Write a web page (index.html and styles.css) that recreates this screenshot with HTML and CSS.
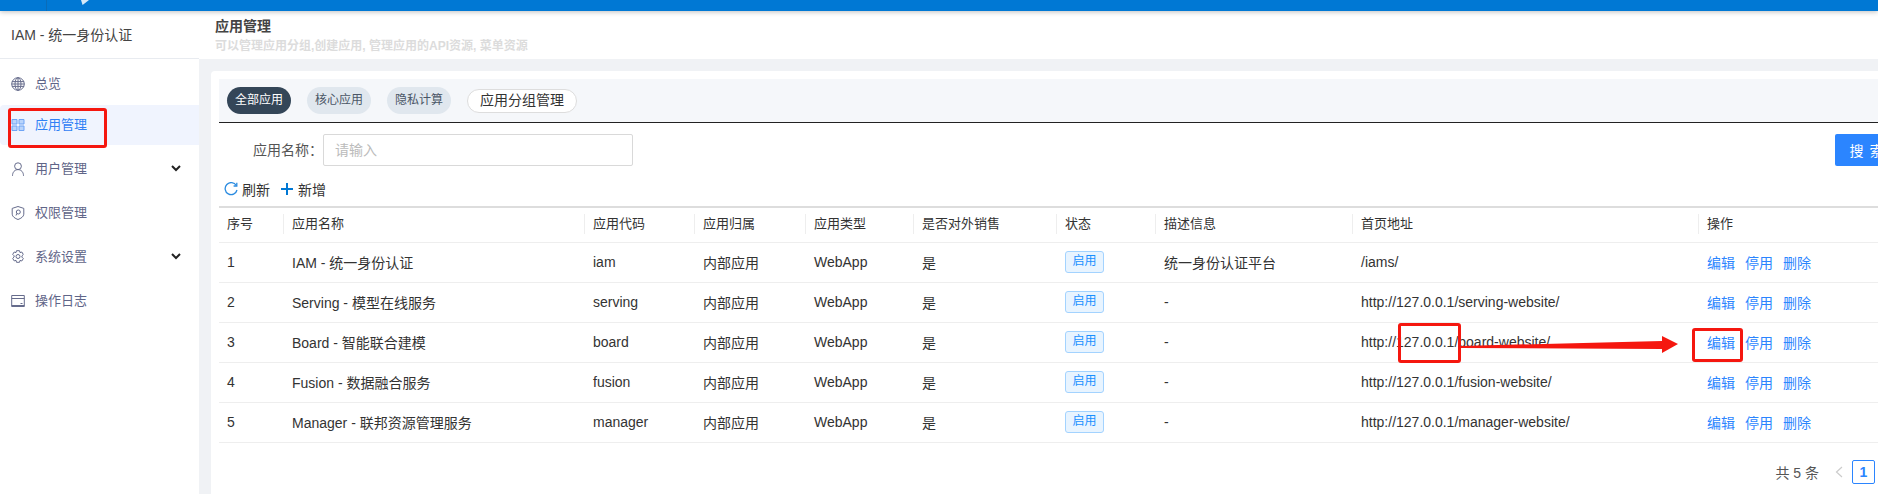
FILE: index.html
```html
<!DOCTYPE html>
<html lang="zh-CN">
<head>
    <meta charset="UTF-8">
    <meta name="viewport" content="width=device-width, initial-scale=1.0">
    <title>应用管理</title>
    <link rel="stylesheet" href="styles.css">
</head>
<body>
    <header class="topbar">
        <span class="topbar-line"></span>
        <span class="topbar-notch"></span>
    </header>

    <div class="layout">
        <aside class="sidebar">
            <div class="brand">IAM - 统一身份认证</div>
            <nav class="menu">
                <a class="menu-item first">
                    <svg class="menu-icon" viewBox="0 0 14 14"><circle cx="7" cy="7" r="6.3"/><ellipse cx="7" cy="7" rx="3" ry="6.3"/><path d="M7 .7v12.6M1 4.600h12M1 9.400h12M.7 7h12.600"/></svg>
                    <span class="menu-text">总览</span>
                </a>
                <a class="menu-item active">
                    <svg class="menu-icon" viewBox="0 0 14 14"><path class="grid-cell" d="M1 1.500h5v4.500H1zM8 1.500h5v4.500H8zM1 8h5v4.500H1zM8 8h5v4.500H8z"/></svg>
                    <span class="menu-text">应用管理</span>
                </a>
                <a class="menu-item">
                    <svg class="menu-icon" viewBox="0 0 14 14"><circle cx="7" cy="4.200" r="3.400"/><path d="M1.500 13.800c0-3.600 2.200-6.200 5.500-6.200s5.500 2.600 5.500 6.200"/></svg>
                    <span class="menu-text">用户管理</span>
                    <svg class="chevron" viewBox="0 0 10 7"><path d="M1 1l4 4 4-4"/></svg>
                </a>
                <a class="menu-item">
                    <svg class="menu-icon" viewBox="0 0 14 14"><path d="M7 .5l5.800 1.900v5.800c0 2.400-2.900 4.300-5.800 5.300-2.900-1-5.800-2.900-5.800-5.300V2.400z"/><circle cx="7.300" cy="6" r="2"/><path d="M5.800 7.500L5 9.500"/></svg>
                    <span class="menu-text">权限管理</span>
                </a>
                <a class="menu-item">
                    <svg class="menu-icon" viewBox="0 0 14 14"><path d="M5.500.7h3l.5 1.900 1.800-.6 1.500 2.500-1.400 1.400v1.200l1.400 1.400-1.500 2.500-1.800-.6-.5 1.900h-3L5 10.300l-1.800.6-1.500-2.500 1.400-1.400V5.800L1.700 4.400 3.200 2l1.800.6z"/><circle cx="7" cy="6.500" r="2"/></svg>
                    <span class="menu-text">系统设置</span>
                    <svg class="chevron" viewBox="0 0 10 7"><path d="M1 1l4 4 4-4"/></svg>
                </a>
                <a class="menu-item">
                    <svg class="menu-icon" viewBox="0 0 14 14"><path d="M.7 1.500h12.600v11H.7zM.7 4.500h12.600"/><path class="card-bar" d="M.7 11h12.600v1.500H.7zM9.500 9h2v1h-2z"/></svg>
                    <span class="menu-text">操作日志</span>
                </a>
            </nav>
        </aside>

        <main class="main">
            <div class="page-head">
                <h1>应用管理</h1>
                <p>可以管理应用分组,创建应用, 管理应用的API资源, 菜单资源</p>
            </div>

            <section class="card">
                <div class="tabs">
                    <span class="pill pill-on">全部应用</span>
                    <span class="pill">核心应用</span>
                    <span class="pill">隐私计算</span>
                    <span class="pill-outline">应用分组管理</span>
                </div>

                <div class="search-row">
                    <label class="search-label" for="appname">应用名称：</label>
                    <input class="search-input" id="appname" type="text" placeholder="请输入">
                    <button class="search-btn">搜 索</button>
                </div>

                <div class="tools">
                    <span class="tool">
                        <svg class="tool-refresh" viewBox="0 0 14 14"><path d="M12.300 3.500A6 6 0 1 0 13 8"/><path d="M12.800 .8v3.200H9.600"/></svg>
                        刷新
                    </span>
                    <span class="tool">
                        <svg class="tool-plus" viewBox="0 0 12 12"><path d="M6 0v12M0 6h12"/></svg>
                        新增
                    </span>
                </div>

                <table class="grid">
                    <colgroup>
                        <col class="c1"><col class="c2"><col class="c3"><col class="c4"><col class="c5">
                        <col class="c6"><col class="c7"><col class="c8"><col class="c9"><col class="c10">
                    </colgroup>
                    <thead>
                        <tr>
                            <th><span class="th-first">序号</span></th>
                            <th><span>应用名称</span></th>
                            <th><span>应用代码</span></th>
                            <th><span>应用归属</span></th>
                            <th><span>应用类型</span></th>
                            <th><span>是否对外销售</span></th>
                            <th><span>状态</span></th>
                            <th><span>描述信息</span></th>
                            <th><span>首页地址</span></th>
                            <th><span>操作</span></th>
                        </tr>
                    </thead>
                    <tbody>
                        <tr>
                            <td class="num">1</td><td>IAM - 统一身份认证</td><td>iam</td><td>内部应用</td><td>WebApp</td><td>是</td>
                            <td><span class="tag">启用</span></td><td>统一身份认证平台</td><td>/iams/</td>
                            <td><a class="act">编辑</a><a class="act">停用</a><a class="act">删除</a></td>
                        </tr>
                        <tr>
                            <td class="num">2</td><td>Serving - 模型在线服务</td><td>serving</td><td>内部应用</td><td>WebApp</td><td>是</td>
                            <td><span class="tag">启用</span></td><td>-</td><td>http://127.0.0.1/serving-website/</td>
                            <td><a class="act">编辑</a><a class="act">停用</a><a class="act">删除</a></td>
                        </tr>
                        <tr>
                            <td class="num">3</td><td>Board - 智能联合建模</td><td>board</td><td>内部应用</td><td>WebApp</td><td>是</td>
                            <td><span class="tag">启用</span></td><td>-</td><td>http://127.0.0.1/board-website/</td>
                            <td><a class="act">编辑</a><a class="act">停用</a><a class="act">删除</a></td>
                        </tr>
                        <tr>
                            <td class="num">4</td><td>Fusion - 数据融合服务</td><td>fusion</td><td>内部应用</td><td>WebApp</td><td>是</td>
                            <td><span class="tag">启用</span></td><td>-</td><td>http://127.0.0.1/fusion-website/</td>
                            <td><a class="act">编辑</a><a class="act">停用</a><a class="act">删除</a></td>
                        </tr>
                        <tr>
                            <td class="num">5</td><td>Manager - 联邦资源管理服务</td><td>manager</td><td>内部应用</td><td>WebApp</td><td>是</td>
                            <td><span class="tag">启用</span></td><td>-</td><td>http://127.0.0.1/manager-website/</td>
                            <td><a class="act">编辑</a><a class="act">停用</a><a class="act">删除</a></td>
                        </tr>
                    </tbody>
                </table>

                <div class="pager">
                    <span class="pager-total">共 5 条</span>
                    <svg class="pager-prev" viewBox="0 0 8 12"><path d="M7 1L1.500 6 7 11"/></svg>
                    <span class="pager-num">1</span>
                </div>
            </section>
        </main>
    </div>

    <!-- marcas vermelhas feitas por cima da captura -->
    <div class="mark mark-menu"></div>
    <div class="mark mark-ip"></div>
    <div class="mark mark-edit"></div>
    <svg class="mark-arrow" viewBox="0 0 220 20"><polygon points="0,10 202,5 202,0 218,8 202,17 202,13 0,12"/></svg>
</body>
</html>
```

FILE: styles.css
```css
* {
    box-sizing: border-box;
}

html, body {
    height: 100%;
}

body {
    margin: 0;
    overflow: hidden;
    background-color: white;
    color: #333;
    font-family: "Liberation Sans", "Noto Sans CJK SC", sans-serif;
    font-size: 14px;
}

/* barra azul */
.topbar {
    display: flex;
    height: 11px;
    background-color: #0078d4;
    box-shadow: 0 1px 5px rgba(0, 0, 0, 0.25);
    position: relative;
    z-index: 2;
}

.topbar-line {
    width: 1px;
    margin-left: 46px;
    background-color: #0a6cb8;
}

.topbar-notch {
    width: 8px;
    height: 5px;
    margin-left: 34px;
    background-color: #d5e9f8;
    clip-path: polygon(0 0, 100% 0, 20% 100%);
}

.layout {
    display: flex;
    height: 483px;
}

/* menu lateral */
.sidebar {
    width: 199px;
    flex-shrink: 0;
    background-color: white;
}

.brand {
    height: 48px;
    padding: 14px 0 0 11px;
    line-height: 20px;
    color: #444;
    border-bottom: 1px solid #e8ebf0;
}

.menu-item {
    display: flex;
    align-items: center;
    height: 40px;
    margin-bottom: 4px;
    padding-left: 11px;
    font-size: 13px;
    color: #5f6588;
}

.menu-text {
    padding-bottom: 3px;
}

.menu-item.first {
    margin-top: 5px;
    margin-bottom: 1px;
}

.menu-item.active {
    color: #2f80f5;
    background-color: #f0f4fe;
    border-radius: 4px 0 0 4px;
}

.menu-icon {
    width: 14px;
    height: 14px;
    margin-right: 10px;
    fill: none;
    stroke: #666c8c;
    stroke-width: 1;
}

.grid-cell {
    fill: #b9d4fb;
    stroke: #6ea4f5;
}

.card-bar {
    fill: #666c8c;
    stroke: none;
}

.chevron {
    width: 10px;
    height: 7px;
    margin-left: auto;
    margin-right: 18px;
    margin-bottom: 2px;
    fill: none;
    stroke: #222;
    stroke-width: 2;
}

/* area principal */
.main {
    flex: 1;
    min-width: 0;
    overflow: hidden;
    background-color: #f0f2f5;
}

.page-head {
    height: 48px;
    padding: 6px 0 0 16px;
    background-color: white;
}

.page-head h1 {
    margin: 0;
    font-size: 14px;
    font-weight: bold;
    line-height: 18px;
    color: #444;
}

.page-head p {
    margin: 2px 0 0;
    font-size: 12px;
    font-weight: bold;
    line-height: 18px;
    color: #dcdcdc;
}

.card {
    height: 423px;
    margin: 12px 0 0 12px;
    padding: 8px 0 0 8px;
    background-color: white;
    border-radius: 4px 0 0 0;
}

.tabs {
    display: flex;
    align-items: center;
    gap: 16px;
    height: 44px;
    padding-left: 8px;
    background-color: #f5f7fa;
    border-bottom: 1px solid #222;
}

.pill {
    width: 64px;
    height: 27px;
    line-height: 27px;
    text-align: center;
    font-size: 12px;
    color: #4a5666;
    background-color: #e0e7ee;
    border-radius: 14px;
}

.pill-on {
    color: white;
    background-color: #344658;
}

.pill-outline {
    width: 110px;
    height: 24px;
    line-height: 21px;
    text-align: center;
    color: #333;
    background-color: white;
    border: 1px solid #ddd;
    border-radius: 12px;
}

.search-row {
    display: flex;
    align-items: center;
    height: 32px;
    margin-top: 11px;
}

.search-label {
    width: 104px;
    padding-bottom: 2px;
    text-align: right;
    color: #555;
    white-space: nowrap;
}

.search-input {
    width: 310px;
    height: 32px;
    padding: 0 11px;
    margin-left: 0;
    font: inherit;
    border: 1px solid #d9d9d9;
    border-radius: 2px;
    outline: none;
}

.search-input::placeholder {
    color: #bbb;
}

.search-btn {
    width: 64px;
    height: 32px;
    margin-left: auto;
    margin-right: -21px;
    padding: 0;
    font: inherit;
    letter-spacing: 1px;
    color: white;
    background-color: #2b85ff;
    border: none;
    border-radius: 2px 0 0 2px;
}

.tools {
    display: flex;
    align-items: center;
    gap: 11px;
    height: 40px;
    padding-top: 5px;
    padding-left: 5px;
}

.tool {
    display: flex;
    align-items: center;
    gap: 4px;
}

.tool-refresh {
    width: 14px;
    height: 14px;
    fill: none;
    stroke: #2a8be0;
    stroke-width: 1.3;
}

.tool-plus {
    width: 12px;
    height: 12px;
    margin-right: 1px;
    fill: none;
    stroke: #0078d4;
    stroke-width: 2;
}

/* tabela */
.grid {
    width: 1659px;
    table-layout: fixed;
    border-collapse: collapse;
    border-top: 2px solid #ddd;
}

.c1 { width: 64px; }
.c2 { width: 301px; }
.c3 { width: 110px; }
.c4 { width: 111px; }
.c5 { width: 108px; }
.c6 { width: 143px; }
.c7 { width: 99px; }
.c8 { width: 197px; }
.c9 { width: 346px; }
.c10 { width: 180px; }

.grid th {
    height: 35px;
    padding: 0 0 2px;
    text-align: left;
    font-size: 13px;
    font-weight: normal;
    border-bottom: 1px solid #eee;
}

.grid th span {
    display: block;
    line-height: 20px;
    padding-left: 8px;
    border-left: 1px solid #eee;
}

.grid th .th-first {
    border-left: none;
}

.grid td {
    height: 40px;
    padding: 0 0 1px 9px;
    white-space: nowrap;
    border-bottom: 1px solid #eee;
}

.grid td.num {
    padding-left: 8px;
}

.tag {
    display: inline-block;
    width: 39px;
    height: 22px;
    line-height: 19px;
    text-align: center;
    font-size: 12px;
    color: #1890ff;
    background-color: #e8f4ff;
    border: 1px solid #a3d3ff;
    border-radius: 3px;
}

.act {
    margin-right: 10px;
    color: #2b85ff;
}

.pager {
    display: flex;
    align-items: center;
    justify-content: flex-end;
    height: 24px;
    margin-top: 17px;
    padding-right: 3px;
}

.pager-total {
    margin-right: 16px;
    color: #555;
}

.pager-prev {
    width: 8px;
    height: 12px;
    margin-right: 9px;
    fill: none;
    stroke: #ccc;
    stroke-width: 1.2;
}

.pager-num {
    width: 23px;
    height: 24px;
    line-height: 22px;
    text-align: center;
    font-weight: bold;
    color: #2b85ff;
    border: 1px solid #2b85ff;
    border-radius: 2px;
}

/* anotacoes */
.mark {
    position: absolute;
    border: 3px solid #f5170f;
    border-radius: 3px;
}

.mark-menu {
    left: 8px;
    top: 108px;
    width: 99px;
    height: 40px;
}

.mark-ip {
    left: 1398px;
    top: 323px;
    width: 63px;
    height: 40px;
}

.mark-edit {
    left: 1692px;
    top: 328px;
    width: 51px;
    height: 34px;
}

.mark-arrow {
    position: absolute;
    left: 1460px;
    top: 336px;
    width: 220px;
    height: 20px;
    fill: #f5170f;
}
```
